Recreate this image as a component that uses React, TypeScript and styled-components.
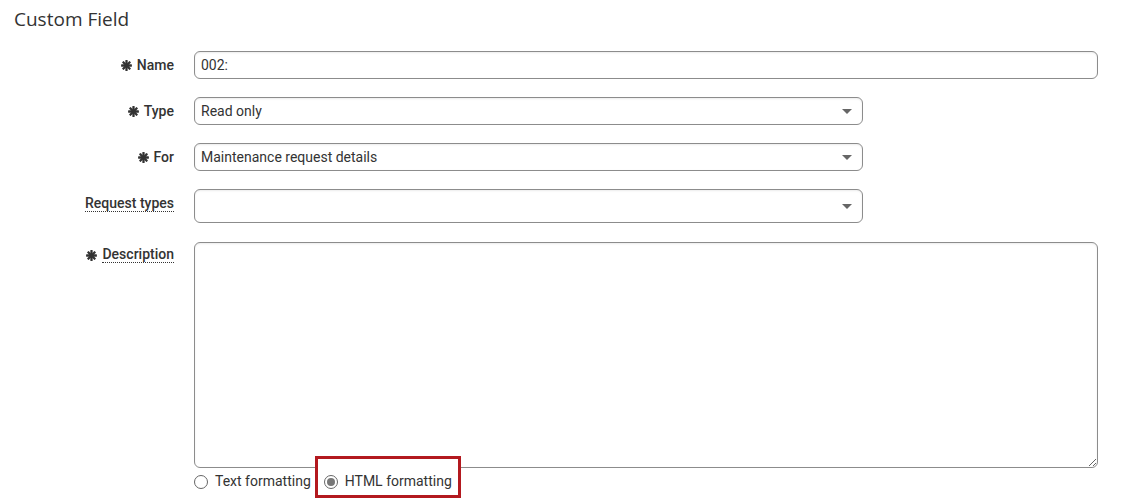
import { ReactNode } from 'react'
import styled, { createGlobalStyle, css } from 'styled-components'

const GlobalStyle = createGlobalStyle`
  body {
    margin: 0;
    background: #fff;
    font-family: Roboto, 'Liberation Sans', sans-serif;
    color: #333;
  }
`

const Page = styled.div`
  padding: 6px 24px 0 14px;
`

const Title = styled.h2`
  margin: 0 0 19px;
  font-family: 'Open Sans', 'Noto Sans', sans-serif;
  font-size: 19px;
  font-weight: 400;
  line-height: 26px;
  color: #333;
`

const Form = styled.div`
  display: grid;
  grid-template-columns: 160px 1fr;
  column-gap: 20px;
  row-gap: 18px;
  align-items: start;
`

const Label = styled.div<{ $height?: number }>`
  display: flex;
  justify-content: flex-end;
  align-items: center;
  gap: 5px;
  height: ${({ $height }) => $height || 28}px;
  font-size: 14px;
  font-weight: 500;
  color: #333;
  white-space: nowrap;
`

const Hint = styled.span`
  border-bottom: 1px dotted #333;
  line-height: 15px;
`

const boxStyle = css`
  box-sizing: border-box;
  border: 1px solid #8c8c8c;
  border-radius: 6px;
  background: #fff;
  box-shadow: inset 0 1px 2px rgba(0, 0, 0, 0.08);
  font-family: Roboto, 'Liberation Sans', sans-serif;
  font-size: 14px;
  color: #333;
`

const TextInput = styled.div`
  ${boxStyle}
  height: 28px;
  display: flex;
  align-items: center;
  padding: 0 6px;
`

const Select = styled.div<{ $height?: number }>`
  ${boxStyle}
  width: 669px;
  height: ${({ $height }) => $height || 28}px;
  display: flex;
  align-items: center;
  justify-content: space-between;
  padding: 0 10px 0 6px;
`

const Caret = styled.span`
  width: 0;
  height: 0;
  border-left: 5px solid transparent;
  border-right: 5px solid transparent;
  border-top: 5px solid #666;
`

const TextArea = styled.textarea`
  ${boxStyle}
  display: block;
  width: 100%;
  height: 226px;
  margin: 1px 0 0;
  resize: both;
  outline: none;
`

const Formatting = styled.div`
  display: flex;
  align-items: flex-start;
  gap: 4px;
  margin-top: 5px;
`

const Option = styled.label<{ $highlight?: boolean }>`
  display: flex;
  align-items: center;
  gap: 7px;
  font-size: 14px;
  line-height: 17px;
  color: #333;
  ${({ $highlight }) =>
    $highlight &&
    css`
      position: relative;
      background: #fff;
      border: 3px solid #b3191f;
      padding: 14px 6px 5px 6px;
      margin-top: -17px;
    `}
`

const Radio = styled.span<{ $checked?: boolean }>`
  box-sizing: border-box;
  width: 14px;
  height: 14px;
  border-radius: 50%;
  border: 1px solid #666;
  background: #fff;
  display: flex;
  align-items: center;
  justify-content: center;
  &::after {
    content: '';
    width: 8px;
    height: 8px;
    border-radius: 50%;
    background: ${({ $checked }) => ($checked ? '#777' : 'transparent')};
  }
`

function Asterisk() {
  return (
    <svg width="11" height="11" viewBox="0 0 11 11">
      <g fill="#333" transform="translate(5.5 5.5)">
        {[0, 45, 90, 135].map((a) => (
          <rect key={a} x="-1.15" y="-5.4" width="2.3" height="10.8" rx="0.5" transform={`rotate(${a})`} />
        ))}
      </g>
    </svg>
  )
}

function FieldLabel({ children, required, hint, height }: { children: ReactNode; required?: boolean; hint?: boolean; height?: number }) {
  return (
    <Label $height={height}>
      {required && <Asterisk />}
      {hint ? <Hint>{children}</Hint> : <span>{children}</span>}
    </Label>
  )
}

export default function App() {
  return (
    <>
      <GlobalStyle />
      <Page>
        <Title>Custom Field</Title>
        <Form>
          <FieldLabel required>Name</FieldLabel>
          <TextInput>002:</TextInput>

          <FieldLabel required>Type</FieldLabel>
          <Select>
            <span>Read only</span>
            <Caret />
          </Select>

          <FieldLabel required>For</FieldLabel>
          <Select>
            <span>Maintenance request details</span>
            <Caret />
          </Select>

          <FieldLabel hint height={30}>
            Request types
          </FieldLabel>
          <Select $height={34}>
            <span />
            <Caret />
          </Select>

          <FieldLabel required hint height={28}>
            Description
          </FieldLabel>
          <div>
            <TextArea />
            <Formatting>
              <Option>
                <Radio />
                Text formatting
              </Option>
              <Option $highlight>
                <Radio $checked />
                HTML formatting
              </Option>
            </Formatting>
          </div>
        </Form>
      </Page>
    </>
  )
}
